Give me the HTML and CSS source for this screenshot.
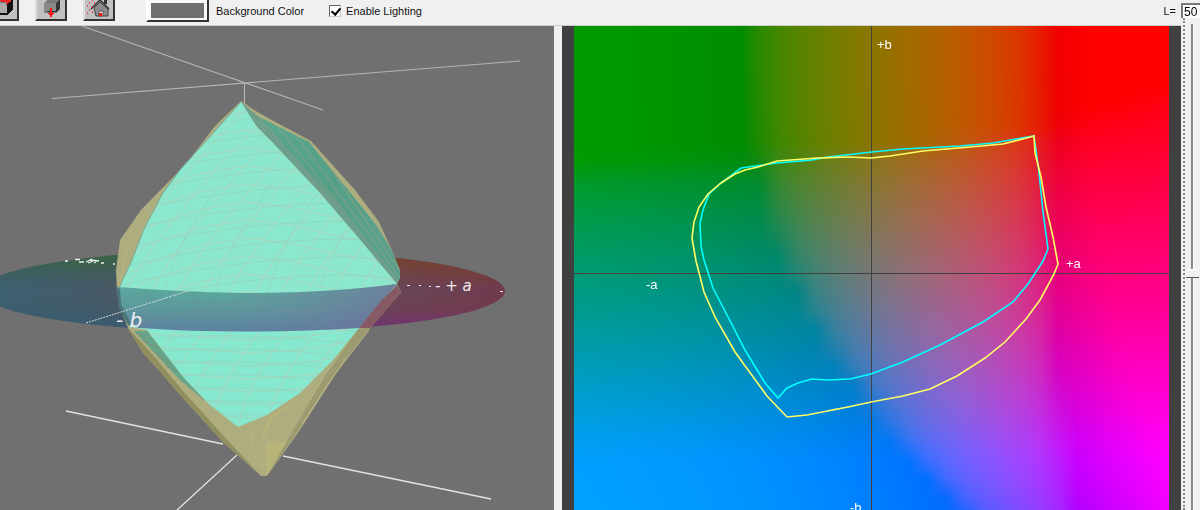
FILE: index.html
```html
<!DOCTYPE html>
<html lang="en">
<head>
<meta charset="utf-8">
<title>Gamut viewer</title>
<link rel="stylesheet" href="styles.css">
</head>
<body>
<div class="app">
  <main class="main">
    <header class="toolbar">
      <div class="tools">
        <button class="tool" type="button" aria-label="Rotate view">
          <svg viewBox="0 0 28 28" shape-rendering="crispEdges"><path d="M4 12l6-5h13v12l-5 5H4z" fill="#777"/><path d="M4 12h14v10H4z" fill="#aaa"/><path d="M18 12l6-5v11l-6 6H7v-2h11z" fill="#111"/><path d="M12 10h8M17 7l4 3-4 3M12 6v4" stroke="#e22" stroke-width="1.5" fill="none"/></svg>
        </button>
        <button class="tool" type="button" aria-label="Move vertically">
          <svg viewBox="0 0 28 28" shape-rendering="crispEdges"><path d="M7 12l4-4h12v10l-4 4H7z" fill="#777"/><path d="M7 12h12v9H7z" fill="#888"/><path d="M19 12l4-4v9l-4 4H10v-1h9z" fill="#333"/><path d="M14 3v6M14 17v7M12 22l2 3 2-3" stroke="#f11" stroke-width="1.5" fill="none"/></svg>
        </button>
        <button class="tool" type="button" aria-label="Home view">
          <svg viewBox="0 0 28 28"><path d="M19 7h3v6h-3z" fill="#333"/><path d="M9 17l6-6 8 7v7H11z" fill="#8c8c8c" stroke="#444"/><path d="M6 18l9-9 9 9" fill="none" stroke="#333" stroke-width="1.5"/><path d="M14 20h4v5h-4z" fill="#eee" stroke="#555"/><path d="M14 22h3v3h-3z" fill="#f11"/><path d="M2 15h1M4 12h1M7 9h1M4 19h1M7 21h1M2 22h1M9 12h1M6 16h1" stroke="#f22" stroke-width="1.5"/></svg>
        </button>
      </div>
      <div class="option">
        <button class="swatch" id="bg" type="button"><span class="swatch-fill"></span></button>
        <label for="bg">Background Color</label>
      </div>
      <div class="option lighting">
        <input class="check" id="light" type="checkbox" checked>
        <label for="light">Enable Lighting</label>
      </div>
    </header>
    <div class="views">
      <section class="scene">
        <svg class="fill" viewBox="0 26 554 484" preserveAspectRatio="xMidYMin slice">
          <defs>
            <linearGradient id="hue"><stop offset="0" stop-color="#3c6277"/><stop offset=".3" stop-color="#4c5863"/><stop offset=".6" stop-color="#5c5262"/><stop offset="1" stop-color="#713a50"/></linearGradient>
            <linearGradient id="warm" x2="0" y2="1"><stop offset="0" stop-color="#7a4028"/><stop offset=".5" stop-color="#7a4028" stop-opacity="0"/><stop offset="1" stop-color="#75288a" stop-opacity=".85"/></linearGradient>
            <linearGradient id="cool" x2="0" y2="1"><stop offset="0" stop-color="#346a38"/><stop offset=".5" stop-color="#405858" stop-opacity="0"/><stop offset="1" stop-color="#305e80" stop-opacity=".8"/></linearGradient>
            <linearGradient id="fadeR"><stop offset=".4" stop-color="#000"/><stop offset=".8" stop-color="#fff"/></linearGradient>
            <linearGradient id="fadeL"><stop offset=".2" stop-color="#fff"/><stop offset=".65" stop-color="#000"/></linearGradient>
            <mask id="right"><path d="M-20 240H506V340H-20z" fill="url(#fadeR)"/></mask>
            <mask id="left"><path d="M-20 240H506V340H-20z" fill="url(#fadeL)"/></mask>
            <linearGradient id="veil" x2="0" y2="1"><stop offset="0" stop-color="#5aaa9d"/><stop offset=".5" stop-color="#5c999c"/><stop offset="1" stop-color="#5d81a1"/></linearGradient>
            <linearGradient id="veilR"><stop offset=".4" stop-color="#6f7aa0" stop-opacity="0"/><stop offset="1" stop-color="#7a659c" stop-opacity=".6"/></linearGradient>
            <linearGradient id="side" x2="1" y2="1"><stop offset="0" stop-color="#62b398"/><stop offset=".5" stop-color="#58a58c"/><stop offset="1" stop-color="#6ab5a0"/></linearGradient>
            <clipPath id="topFace"><path d="M241 102L180 170 163 193 145 227 132 260 119 288Q180 292 240 293 330 293 397 284L362 242 320 193 273 143 257 127z"/></clipPath>
            <clipPath id="lowFace"><path d="M119 287Q240 299 397 285L380 303 359 328 333 360 300 393 267 415 238 427 210 405 183 377 147 330 130 327 120 303z"/></clipPath>
            <clipPath id="sideFace"><path d="M241 102l16 14 10 5 42 21 44 54 24 30 13 21 10 24v7l-3 6-35-42-42-49-47-50-16-16z"/></clipPath>
          </defs>
          <g stroke="#b4b4b4" stroke-width="1.100">
            <path d="M82 26L323 110M52 98.500L520 61M244.500 83v22"/>
          </g>
          <path d="M66 411l157 33M283 456l208 43M237 455l-61 56" stroke="#e2e2e2" stroke-width="1.300"/>
          <g>
            <ellipse cx="243" cy="291" rx="262" ry="41" fill="url(#hue)"/>
            <ellipse cx="243" cy="291" rx="262" ry="41" fill="url(#warm)" mask="url(#right)"/>
            <ellipse cx="243" cy="291" rx="262" ry="41" fill="url(#cool)" mask="url(#left)"/>
          </g>
          <path d="M65 261h3M75 259.500h5M79 262h5M86 262l6-3M90 260l9 1M88 263l5-2M94 263l2-1M101 263h3M113 264h2" stroke="#eee" stroke-width="1.300"/>
          <!-- outer gamut -->
          <path d="M241 101L215 126 193 155 180 170 141 210 120 240 116 270 117 292 120 308 128 328 143 353 157 368 183 398 223 442 261 476 267 476 300 430 340 367 370 328 401 292 397 284 400 270 390 246 379 222 355 190 311 141 268 118 254 110z" fill="#aead80"/>
          <path d="M128 328l15 25 14 15 26 30 40 44 38 34-32-34-45-50-32-38z" fill="#918f5e"/>
          <path d="M401 292l-31 36-30 39-34 52-39 57 24-42 34-58 34-48 38-43z" fill="#9c9b70"/>
          <path d="M369 330l-43 56-22 36M347 356l-45 68" stroke="#b6b383" fill="none"/>
          <path d="M303 396l-30 22-13 28 8-28 14-9zM267 442l10 2 10-3-19 33z" fill="#b8b478"/>
          <path d="M267 474v-32h9l10 1M222 407l24 28 24 15M254 425l-3 25 12 18M128 245l-9 40" stroke="#c2bb82" fill="none" opacity=".6"/>
          <g clip-path="url(#sideFace)">
            <path d="M230 90h180v210H230z" fill="url(#side)"/>
            <g id="sideMesh" fill="none" stroke-width="1"></g>
          </g>
          <path d="M241 102l16 25 16 16 47 50 42 49 35 42 0-7-34-41-30-38-48-52-27-30z" fill="#739d8c" opacity=".8"/>
          <g clip-path="url(#lowFace)">
            <path d="M110 280h300v150H110z" fill="#86e8ce"/>
            <g id="lowMesh" fill="none" stroke="#b2ceb9" opacity=".75"></g>
          </g>
          <path d="M134 331h13l36 46 23 25-26-22-29-31z" fill="#65a58c"/>
          <path d="M136 333l12 6M142 340l15 8M151 349l12 9M158 357l13 8M166 366l10 5" stroke="#7d8e75"/>
          <g clip-path="url(#topFace)">
            <path d="M110 90h300v210H110z" fill="#8be7cd"/>
            <g id="topMesh" fill="none" stroke="#b4d0b9" opacity=".75"></g>
          </g>
          <path d="M241 102l-61 68-17 23-18 34-13 33-13 28" fill="none" stroke="#75ad9b"/>
          <!-- plane in front of the solids -->
          <path d="M119 287Q180 292 240 293 330 293 397 284L380 303 359 328Q240 335 139 328L130 324 120 303z" fill="url(#veil)"/>
          <path d="M119 287Q180 292 240 293 330 293 397 284L380 303 359 328Q240 335 139 328L130 324 120 303z" fill="url(#veilR)"/>
          <path d="M397 285l4 7-31 36h-11l21-26z" fill="#875965"/>
          <path d="M120 289l-4-3 3 22 9 17 4 1-11-22z" fill="#4c7479"/>
          <path d="M150 290l-6 36M200 293l-20 37M250 293l-20 38M300 293l-40 38M120 298l90 5 90 9 70-10M140 323l80-18 90-12" stroke="#7d8c96" fill="none" opacity=".4"/>
          <path d="M86 323l102-32" stroke="#d5dfe3" stroke-dasharray="2 1"/>
          <path d="M407 285.500h3M419 285.500h2M429 286.500h2M500 291.500h3" stroke="#eee"/>
          <text class="axis-text" x="116" y="327">- b</text>
          <text class="axis-text far" x="435" y="291">- + a</text>
        </svg>
      </section>
      <section class="plot">
        <div class="stage">
          <canvas class="fill" id="lab" width="595" height="484"></canvas>
          <svg class="fill" viewBox="574 26 595 484" preserveAspectRatio="xMidYMin slice">
            <path d="M871.500 26v484M574 273.500h595" stroke="#404040" shape-rendering="crispEdges"/>
            <g fill="none" stroke-width="1.600">
              <path stroke="#0ff" d="M741 168L777 163 812 160 828 157 872 152 903 149 960 146 993 143 1034 136 1039 172 1043 212 1048 249 1043 261 1028 284 1013 302 983 322 940 345 903 362 871 374 850 379 828 380 812 379 798 383 787 388 778 398 765 383 745 350 727 315 713 288 704 260 701 246 700 223 703 210 709 194 721 183z"/>
              <path stroke="#ff6" d="M1034 136L1023 139 1003 144 970 147 923 151 890 156 871 158 848 157 818 158 777 161 758 167 745 170 735 174 721 183 708 194 699 207 694 222 692 238 696 261 704 292 715 317 735 352 767 396 787 417 807 415 848 407 871 402 903 396 930 389 957 376 985 358 1005 342 1026 319 1040 300 1054 274 1058 264 1053 237 1046 207 1041 177 1035 153z"/>
            </g>
            <g class="labels"><text x="877" y="49">+b</text><text x="1066" y="268">+a</text><text x="646" y="289">-a</text><text x="850" y="512">-b</text></g>
          </svg>
        </div>
      </section>
    </div>
  </main>
  <aside class="level">
    <div class="level-head"><label for="lv">L=</label><input class="level-value" id="lv" type="text" value="50"></div>
    <div class="level-body"><input class="slider" type="range" min="0" max="100" value="50" aria-label="Lightness"></div>
  </aside>
</div>
<script src="app.js"></script>
</body>
</html>
```
FILE: styles.css
```css
* { box-sizing: border-box; }
body {
  margin: 0;
  background: #f0f0f0;
  color: #111;
  font: 11px/14px "Liberation Sans", Arial, sans-serif;
}
.app { display: flex; height: 100vh; overflow: hidden; }
.main { flex: 1; min-width: 0; display: flex; flex-direction: column; }
.toolbar {
  display: flex;
  align-items: flex-end;
  height: 26px;
  padding-bottom: 3px;
  border-bottom: 1px solid #cfcfcf;
  overflow: hidden;
}
.tools { display: flex; gap: 16px; margin: 0 0 1px -13px; align-items: flex-end; }
.tool {
  width: 32px;
  height: 32px;
  padding: 0;
  background: #c0c0c0;
  border: 2px solid;
  border-color: #fff #333 #333 #ddd;
  flex: none;
}
.tool svg { display: block; width: 28px; height: 28px; }
.option { display: flex; align-items: center; gap: 7px; margin-left: 31px; height: 22px; }
.swatch {
  width: 63px;
  height: 26px;
  padding: 4px 3px 2px;
  background: #f8f8f8;
  border: 2px solid;
  border-color: #fff #333 #333 #fff;
  align-self: flex-end;
}
.swatch-fill { display: block; height: 15px; background: #707070; }
.lighting { margin-left: 25px; gap: 5px; }
.check {
  appearance: none;
  width: 12px;
  height: 12px;
  margin: 0;
  background: #fff;
  border: 1px solid;
  border-color: #666 #ccc #ccc #666;
  position: relative;
}
.check:checked::after {
  content: "";
  position: absolute;
  left: 3px;
  top: 0;
  width: 4px;
  height: 7px;
  border: solid #000;
  border-width: 0 2px 2px 0;
  transform: rotate(40deg);
}
.views { flex: 1; min-height: 0; display: grid; grid-template-columns: 554fr 619fr; gap: 8px; }
.scene { background: #707070; overflow: hidden; min-height: 0; }
.plot { background: #404040; padding: 0 12px; min-height: 0; }
.stage { display: grid; height: 100%; overflow: hidden; }
.stage > * { grid-area: 1 / 1; min-height: 0; }
.fill { display: block; width: 100%; height: 100%; object-fit: cover; object-position: top; }
.axis-text { font: italic 20px "DejaVu Sans", sans-serif; fill: #eee; }
.far { font-size: 15px; }
.labels { font: 13px "Liberation Sans", Arial, sans-serif; fill: #fff; }
.level { width: 19px; display: flex; flex-direction: column; }
.level-head {
  display: flex;
  align-self: flex-end;
  align-items: center;
  gap: 5px;
  padding-top: 3px;
}
.level-value {
  width: 19px;
  height: 15px;
  padding: 0 0 0 1px;
  border: solid #777;
  border-width: 2px 0 0 2px;
  background: #fff;
  font: inherit;
  font-size: 12px;
}
.level-body { flex: 1; min-height: 0; overflow: hidden; margin-left: 2px; border-left: 2px dotted #888; }
.slider {
  appearance: none;
  writing-mode: vertical-lr;
  direction: rtl;
  display: block;
  width: 14px;
  height: calc(100% + 6px);
  margin: 6px 0 0;
  background: linear-gradient(to right, transparent 6px, #888 6px, #888 8px, #fff 8px, #fff 9px, transparent 9px);
}
.slider::-webkit-slider-thumb {
  appearance: none;
  width: 13px;
  height: 9px;
  background: #f0f0f0;
  border-top: 1px solid #fff;
  border-bottom: 1px solid #555;
}
```
FILE: app.js
```js
// Lab plane at L=50 (D50 white), sampled on a coarse lattice and blended between nodes.
const L = 50;
const step = 8;
const scale = 2.34;

function gamma(v) {
  v = Math.min(1, Math.max(0, v));
  return 255 * (v <= 0.0031308 ? 12.92 * v : 1.055 * Math.pow(v, 1 / 2.4) - 0.055);
}
function inv(t) {
  return t > 6 / 29 ? t * t * t : Math.max(0, (t - 4 / 29) * 3 * 36 / 841);
}
function labToRgb(a, b) {
  const fy = (L + 16) / 116;
  const X = 0.9642 * inv(fy + a / 500);
  const Y = inv(fy);
  const Z = 0.8249 * inv(fy - b / 200);
  return [
    gamma(3.1339 * X - 1.6169 * Y - 0.4906 * Z),
    gamma(-0.9788 * X + 1.9161 * Y + 0.0335 * Z),
    gamma(0.0719 * X - 0.229 * Y + 1.4052 * Z)
  ];
}
const half = 17;
const nodes = [];
for (let j = -half; j <= half; j++) {
  const row = [];
  for (let i = -half; i <= half; i++) row.push(labToRgb(i * step, j * step));
  nodes.push(row);
}
const canvas = document.getElementById("lab");
const ctx = canvas.getContext("2d");
const img = ctx.createImageData(canvas.width, canvas.height);
for (let y = 0, k = 0; y < canvas.height; y++) {
  const v = (247 - y) / scale / step + half;
  const j = Math.floor(v), fv = v - j;
  for (let x = 0; x < canvas.width; x++, k += 4) {
    const u = (x - 297) / scale / step + half;
    const i = Math.floor(u), fu = u - i;
    for (let c = 0; c < 3; c++) {
      const p = nodes[j][i][c] * (1 - fu) + nodes[j][i + 1][c] * fu;
      const q = nodes[j + 1][i][c] * (1 - fu) + nodes[j + 1][i + 1][c] * fu;
      img.data[k + c] = p * (1 - fv) + q * fv;
    }
    img.data[k + 3] = 255;
  }
}
ctx.putImageData(img, 0, 0);

// Wireframes of the inner solid
function addPath(id, d, stroke) {
  const p = document.createElementNS("http://www.w3.org/2000/svg", "path");
  p.setAttribute("d", d);
  if (stroke) p.setAttribute("stroke", stroke);
  document.getElementById(id).appendChild(p);
}
for (let n = 0; n < 11; n++) {
  const y = 112 + n * 18;
  addPath("topMesh", `M110 ${y + 45}L150 ${y + 24}L200 ${y + 8}L245 ${y}L290 ${y + 5}L340 ${y + 17}L400 ${y + 25}`);
  addPath("topMesh", `M110 ${y + 32}Q200 ${y + 9} 290 ${y + 3}T410 ${y + 10}`, "#96d2bf");
}
for (let n = 0; n < 13; n++) {
  const x = 95 + n * 26;
  addPath("topMesh", `M${x} 300Q${x + 30} 235 ${x + 150} 110`);
  if (n % 2) addPath("topMesh", `M${x - 12} 300Q${x + 10} 210 ${x + 120} 100`, "#96d2bf");
}
for (let n = 0; n < 9; n++) {
  const y = 320 + n * 13;
  addPath("lowMesh", `M120 ${y}L190 ${y + 3}L250 ${y + 7}L310 ${y + 3}L390 ${y - 12}`);
  addPath("lowMesh", `M130 ${y + 8}Q230 ${y - 5} 380 ${y + 14}`, "#98d2bf");
}
for (let n = 0; n < 10; n++) {
  const x = 95 + n * 28;
  addPath("lowMesh", `M${x} 440Q${x + 10} 370 ${x + 90} 290`);
}
for (let n = 0; n < 24; n++) {
  const o = n * 4;
  addPath("sideMesh", `M${225 + o} 90L${285 + o} ${160 + n}L${395 + o / 5} ${290 - n}`, n % 3 ? "#4f947e" : "#83917a");
}
```
